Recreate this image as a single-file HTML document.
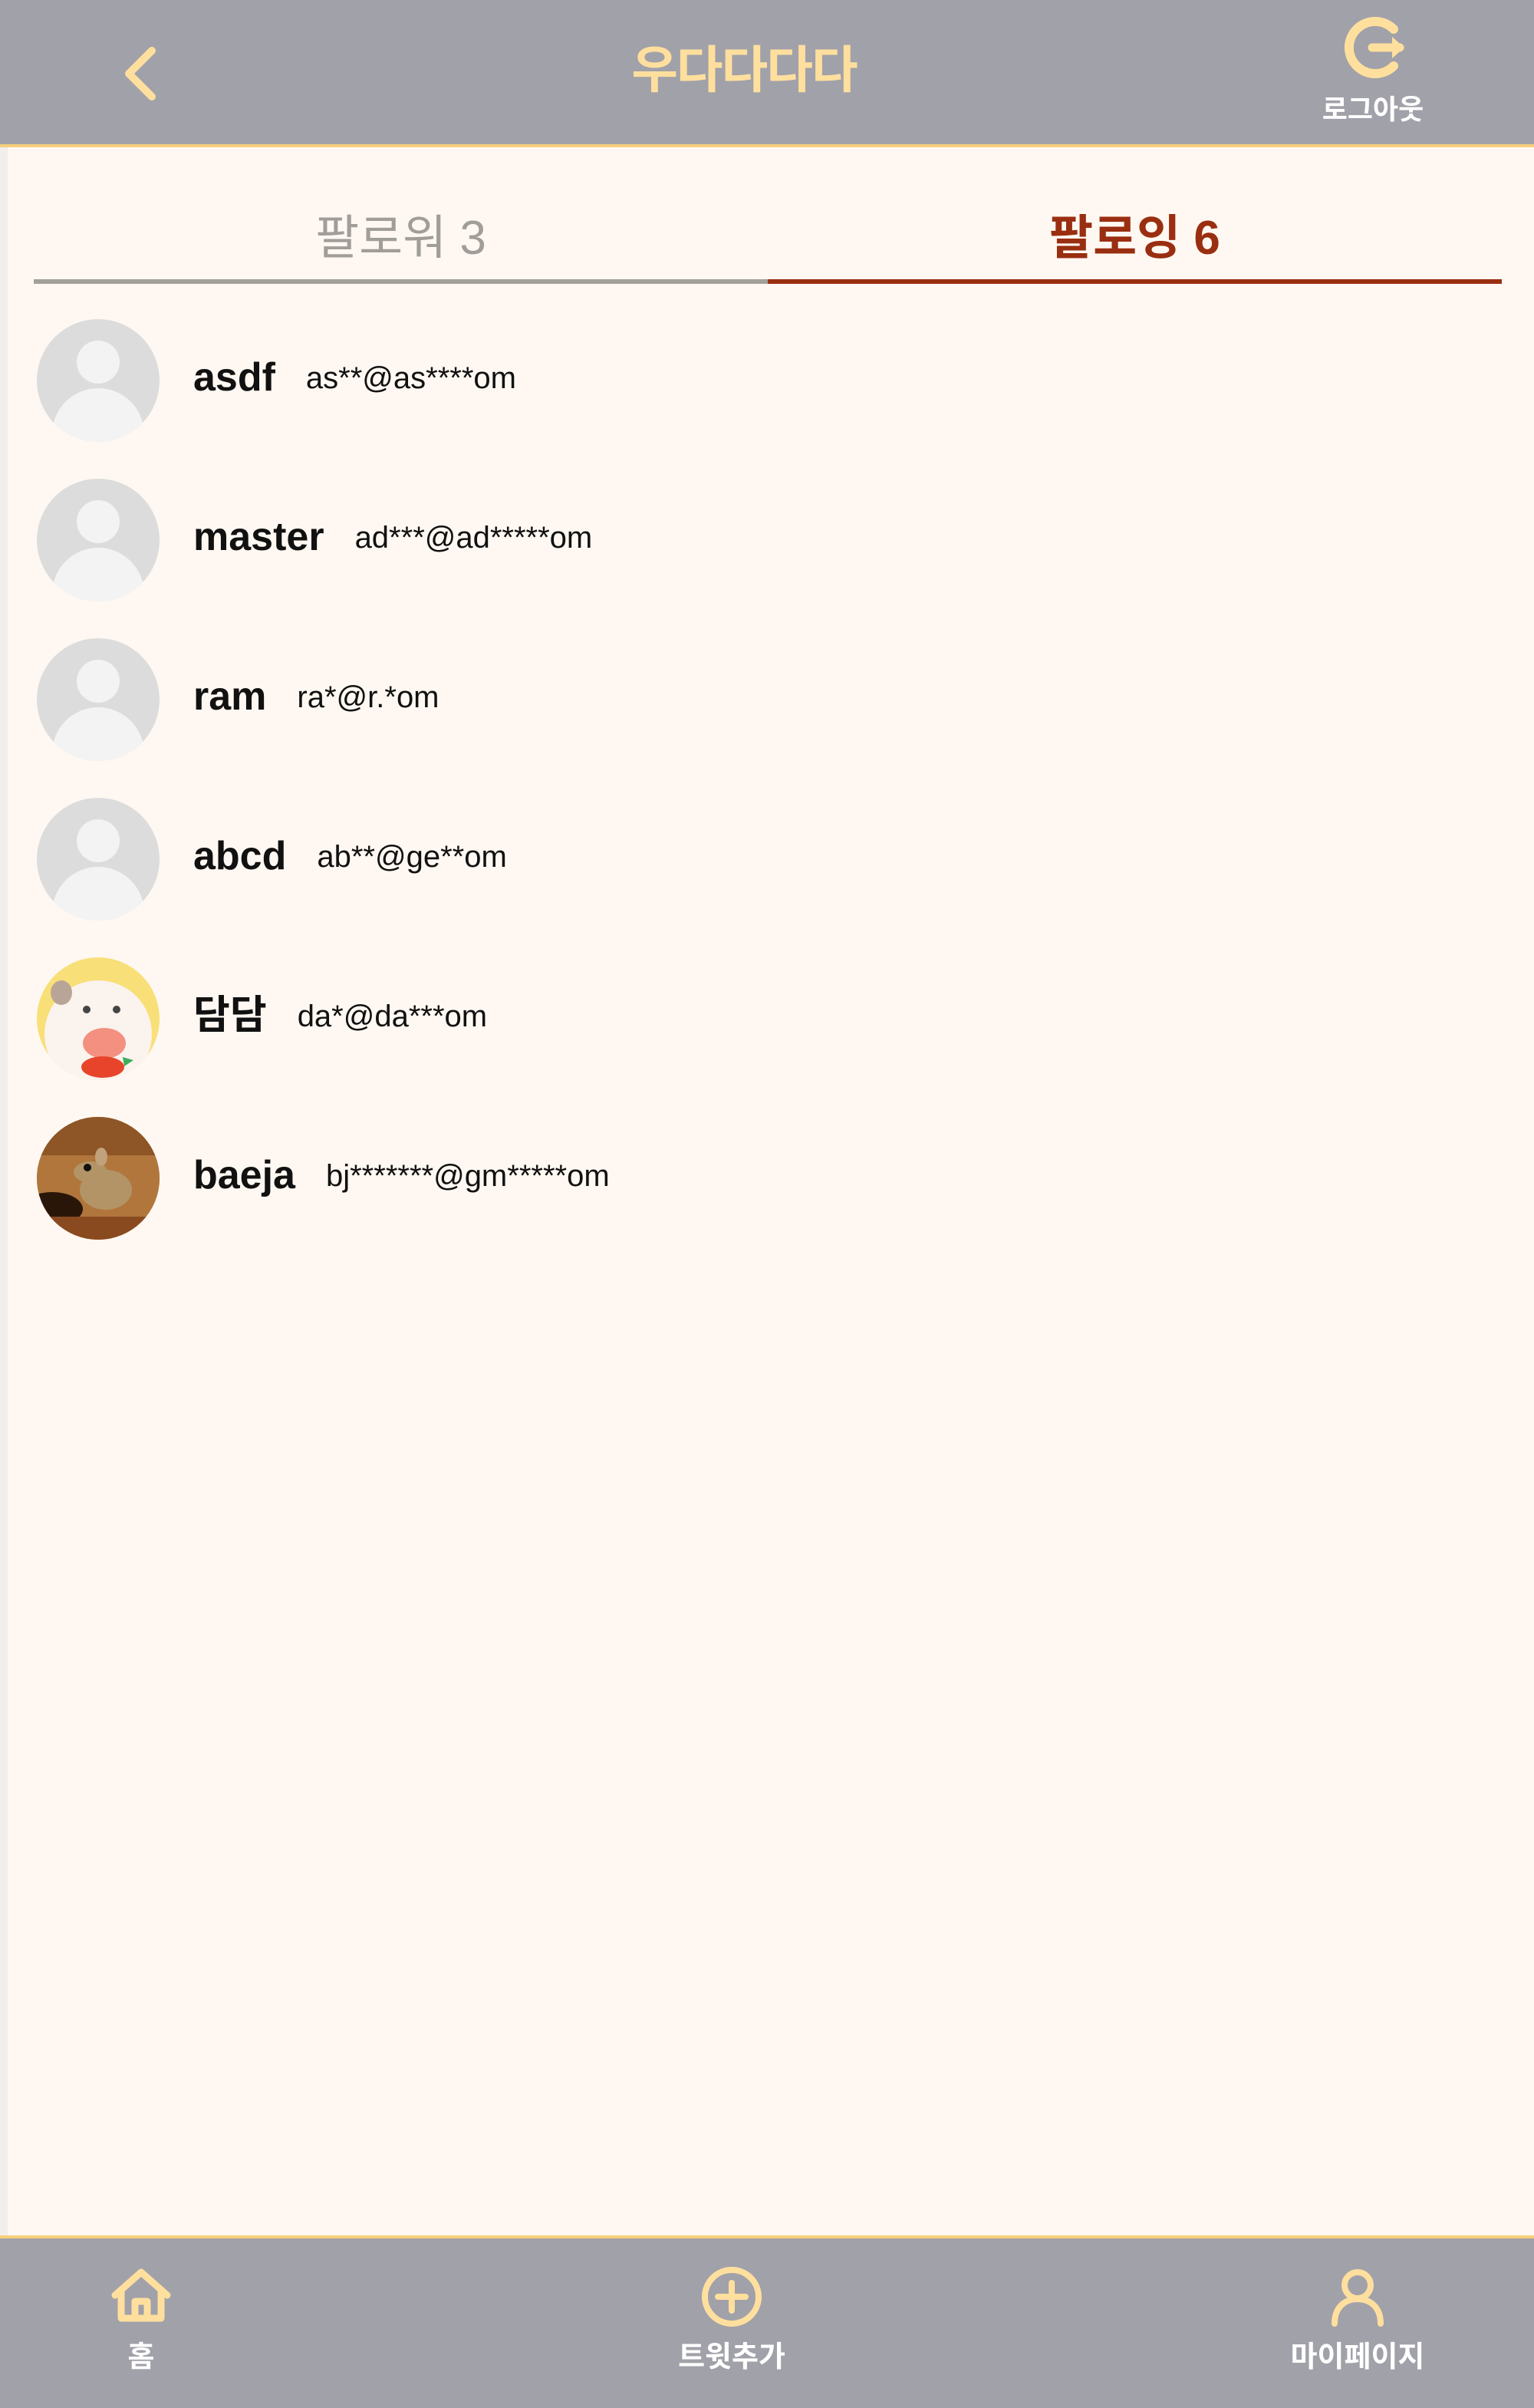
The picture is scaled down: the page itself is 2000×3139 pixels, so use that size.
<!DOCTYPE html>
<html><head><meta charset="utf-8"><style>
*{margin:0;padding:0;box-sizing:border-box}
html,body{width:2000px;height:3139px;overflow:hidden}
body{background:#fff8f2;font-family:"Liberation Sans","Noto Sans CJK KR",sans-serif;position:relative}
.lb{position:absolute;left:0;top:0;width:10px;height:3139px;background:#f1eeec}
.hdr{position:absolute;left:0;top:0;width:2000px;height:192px;background:#a1a1a9;border-bottom:4px solid #f6cf7a}
.title{position:absolute;left:770px;width:400px;top:46px;text-align:center;font-size:66px;font-weight:bold;color:#ffdf9e;line-height:90px;letter-spacing:-2px}
.lo{position:absolute;left:1700px;width:180px;top:118px;text-align:center;font-size:36px;font-weight:bold;color:#fff;line-height:50px}
.tab{position:absolute;top:276px;width:957px;text-align:center;font-size:62px;font-weight:bold;line-height:70px}
.row{position:absolute;left:48px;height:160px;width:1500px}
.av{position:absolute;left:0;top:0;width:160px;height:160px;border-radius:50%;overflow:hidden;background:#dcdcdc}
.nm{position:absolute;left:204px;top:46px;font-size:52px;font-weight:bold;color:#111;line-height:60px}
.em{font-size:40px;font-weight:normal;margin-left:40px;letter-spacing:0;color:#111;vertical-align:3px}
.ftr{position:absolute;left:0;top:2914px;width:2000px;height:225px;background:#a1a1a9;border-top:4px solid #f6cf7a}
.fl{position:absolute;top:3050px;width:300px;text-align:center;font-size:38px;font-weight:bold;color:#fff;line-height:46px}
</style></head><body>
<div class="lb"></div>
<div class="hdr">
<svg style="position:absolute;left:150px;top:58px" width="70" height="76" viewBox="0 0 70 76"><path d="M48 8 L18 38 L48 68" fill="none" stroke="#ffdf9e" stroke-width="10" stroke-linecap="round" stroke-linejoin="round"/></svg>
<div class="title">우다다다다</div>
<svg style="position:absolute;left:1745px;top:18px" width="100" height="90" viewBox="0 0 100 90"><path d="M72 20 A34 34 0 1 0 72 68" fill="none" stroke="#ffdf9e" stroke-width="12" stroke-linecap="round"/><path d="M44 44 H80" stroke="#ffdf9e" stroke-width="11" stroke-linecap="round"/><path d="M70 30 L86 44 L70 58 Z" fill="#ffdf9e"/></svg>
<div class="lo">로그아웃</div>
</div>
<div class="tab" style="left:44px;color:#a19d99;font-weight:normal">팔로워 3</div>
<div class="tab" style="left:1001px;color:#9a2e10">팔로잉 6</div>
<div style="position:absolute;left:44px;top:364px;width:957px;height:6px;background:#a39f9b"></div>
<div style="position:absolute;left:1001px;top:364px;width:957px;height:6px;background:#9a2e10"></div>

<div class="row" style="top:416px"><div class="av"><svg width="160" height="160"><circle cx="80" cy="56" r="28" fill="#f3f3f3"/><ellipse cx="80" cy="150" rx="60" ry="60" fill="#f3f3f3"/></svg></div><div class="nm">asdf<span class="em">as**@as****om</span></div></div>
<div class="row" style="top:624px"><div class="av"><svg width="160" height="160"><circle cx="80" cy="56" r="28" fill="#f3f3f3"/><ellipse cx="80" cy="150" rx="60" ry="60" fill="#f3f3f3"/></svg></div><div class="nm">master<span class="em">ad***@ad*****om</span></div></div>
<div class="row" style="top:832px"><div class="av"><svg width="160" height="160"><circle cx="80" cy="56" r="28" fill="#f3f3f3"/><ellipse cx="80" cy="150" rx="60" ry="60" fill="#f3f3f3"/></svg></div><div class="nm">ram<span class="em">ra*@r.*om</span></div></div>
<div class="row" style="top:1040px"><div class="av"><svg width="160" height="160"><circle cx="80" cy="56" r="28" fill="#f3f3f3"/><ellipse cx="80" cy="150" rx="60" ry="60" fill="#f3f3f3"/></svg></div><div class="nm">abcd<span class="em">ab**@ge**om</span></div></div>
<div class="row" style="top:1248px"><div class="av" style="background:#f8df78"><svg width="160" height="160"><ellipse cx="80" cy="100" rx="70" ry="70" fill="#faf3ee"/><ellipse cx="32" cy="46" rx="14" ry="16" fill="#b9a598"/><circle cx="65" cy="68" r="5" fill="#444"/><circle cx="104" cy="68" r="5" fill="#444"/><ellipse cx="88" cy="112" rx="28" ry="20" fill="#f49080"/><ellipse cx="86" cy="143" rx="28" ry="14" fill="#e8442c"/><path d="M112 130 l14 4 -12 8z" fill="#3fae5a"/></svg></div><div class="nm">담담<span class="em">da*@da***om</span></div></div>
<div class="row" style="top:1456px"><div class="av" style="background:#a66a34"><svg width="160" height="160"><rect width="160" height="160" fill="#b0763c"/><rect y="0" width="160" height="50" fill="#8e5526"/><ellipse cx="20" cy="120" rx="40" ry="22" fill="#2a1608"/><rect y="130" width="160" height="30" fill="#8a4a20"/><ellipse cx="90" cy="95" rx="34" ry="26" fill="#b39466"/><ellipse cx="70" cy="72" rx="22" ry="14" fill="#b39466"/><circle cx="66" cy="66" r="5" fill="#111"/><ellipse cx="84" cy="52" rx="8" ry="12" fill="#c2a27a"/></svg></div><div class="nm">baeja<span class="em">bj*******@gm*****om</span></div></div>

<div class="ftr"></div>
<svg style="position:absolute;left:140px;top:2954px" width="90" height="74" viewBox="0 0 90 74"><path d="M10 38 L44 8 L78 38 M18 32 V68 H70 V32 M36 68 V46 H52 V68" fill="none" stroke="#ffdf9e" stroke-width="9" stroke-linejoin="round" stroke-linecap="round"/></svg>
<div class="fl" style="left:34px">홈</div>
<svg style="position:absolute;left:912px;top:2952px" width="84" height="84" viewBox="0 0 84 84"><circle cx="42" cy="42" r="35" fill="none" stroke="#ffdf9e" stroke-width="8"/><path d="M42 24 V60 M24 42 H60" stroke="#ffdf9e" stroke-width="8" stroke-linecap="round"/></svg>
<div class="fl" style="left:804px">트윗추가</div>
<svg style="position:absolute;left:1730px;top:2955px" width="80" height="80" viewBox="0 0 80 80"><circle cx="40" cy="24" r="17" fill="none" stroke="#ffdf9e" stroke-width="8"/><path d="M10 74 C10 52 24 42 40 42 C56 42 70 52 70 74" fill="none" stroke="#ffdf9e" stroke-width="8" stroke-linecap="round"/></svg>
<div class="fl" style="left:1620px">마이페이지</div>
</body></html>
